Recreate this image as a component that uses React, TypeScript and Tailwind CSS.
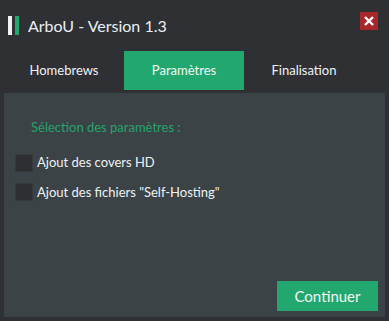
import React from "react";

export default function App() {
  const font = { fontFamily: 'Lato, "Noto Sans", sans-serif' };
  return (
    <div className="w-[389px] h-[321px] bg-[#2e3033] flex flex-col overflow-hidden" style={font}>
      <div className="h-[51px] flex items-center relative">
        <div className="ml-[8px] w-[4px] h-[19px] bg-[#f2f2f2]" />
        <div className="ml-[3px] w-[4px] h-[19px] bg-[#22a86f]" />
        <div className="ml-[9px] text-[16px] text-[#e8eef5] leading-none">ArboU - Version 1.3</div>
        <div className="absolute left-[360px] top-[12px] w-[18px] h-[18px] bg-[#a8272b] flex items-center justify-center">
          <svg width="10" height="10" viewBox="0 0 10 10">
            <path d="M1 1 L9 9 M9 1 L1 9" stroke="#ffffff" strokeWidth="2.4" />
          </svg>
        </div>
      </div>
      <div className="h-[39px] pl-[4px] flex">
        <div className="w-[120px] flex items-center justify-center text-[13px] text-[#eef2f5]">Homebrews</div>
        <div className="w-[120px] flex items-center justify-center text-[13px] text-[#f2f6f5] bg-[#22a86f]">Paramètres</div>
        <div className="w-[120px] flex items-center justify-center text-[13px] text-[#eef2f5]">Finalisation</div>
      </div>
      <div className="mt-[3px] mx-[4px] mb-[4px] flex-1 bg-[#3c4346] flex flex-col">
        <div className="mt-[25px] ml-[27px] text-[13px] text-[#23a36b] leading-[18px]">Sélection des paramètres :</div>
        <div className="mt-[17px] ml-[11px] flex flex-col gap-[10px]">
          <div className="flex items-center gap-[4px]">
            <div className="w-[18px] h-[18px] bg-[#2d2f31] border border-[#36393b]" />
            <span className="text-[13px] text-[#eef2f5]">Ajout des covers HD</span>
          </div>
          <div className="flex items-center gap-[4px]">
            <div className="w-[18px] h-[18px] bg-[#2d2f31] border border-[#36393b]" />
            <span className="text-[13px] text-[#eef2f5]">Ajout des fichiers "Self-Hosting"</span>
          </div>
        </div>
        <div className="flex-1" />
        <div className="flex justify-end mr-[7px] mb-[6px]">
          <div className="w-[101px] h-[30px] bg-[#22a86f] flex items-center justify-center text-[15px] text-[#f2f6f5]">Continuer</div>
        </div>
      </div>
    </div>
  );
}
